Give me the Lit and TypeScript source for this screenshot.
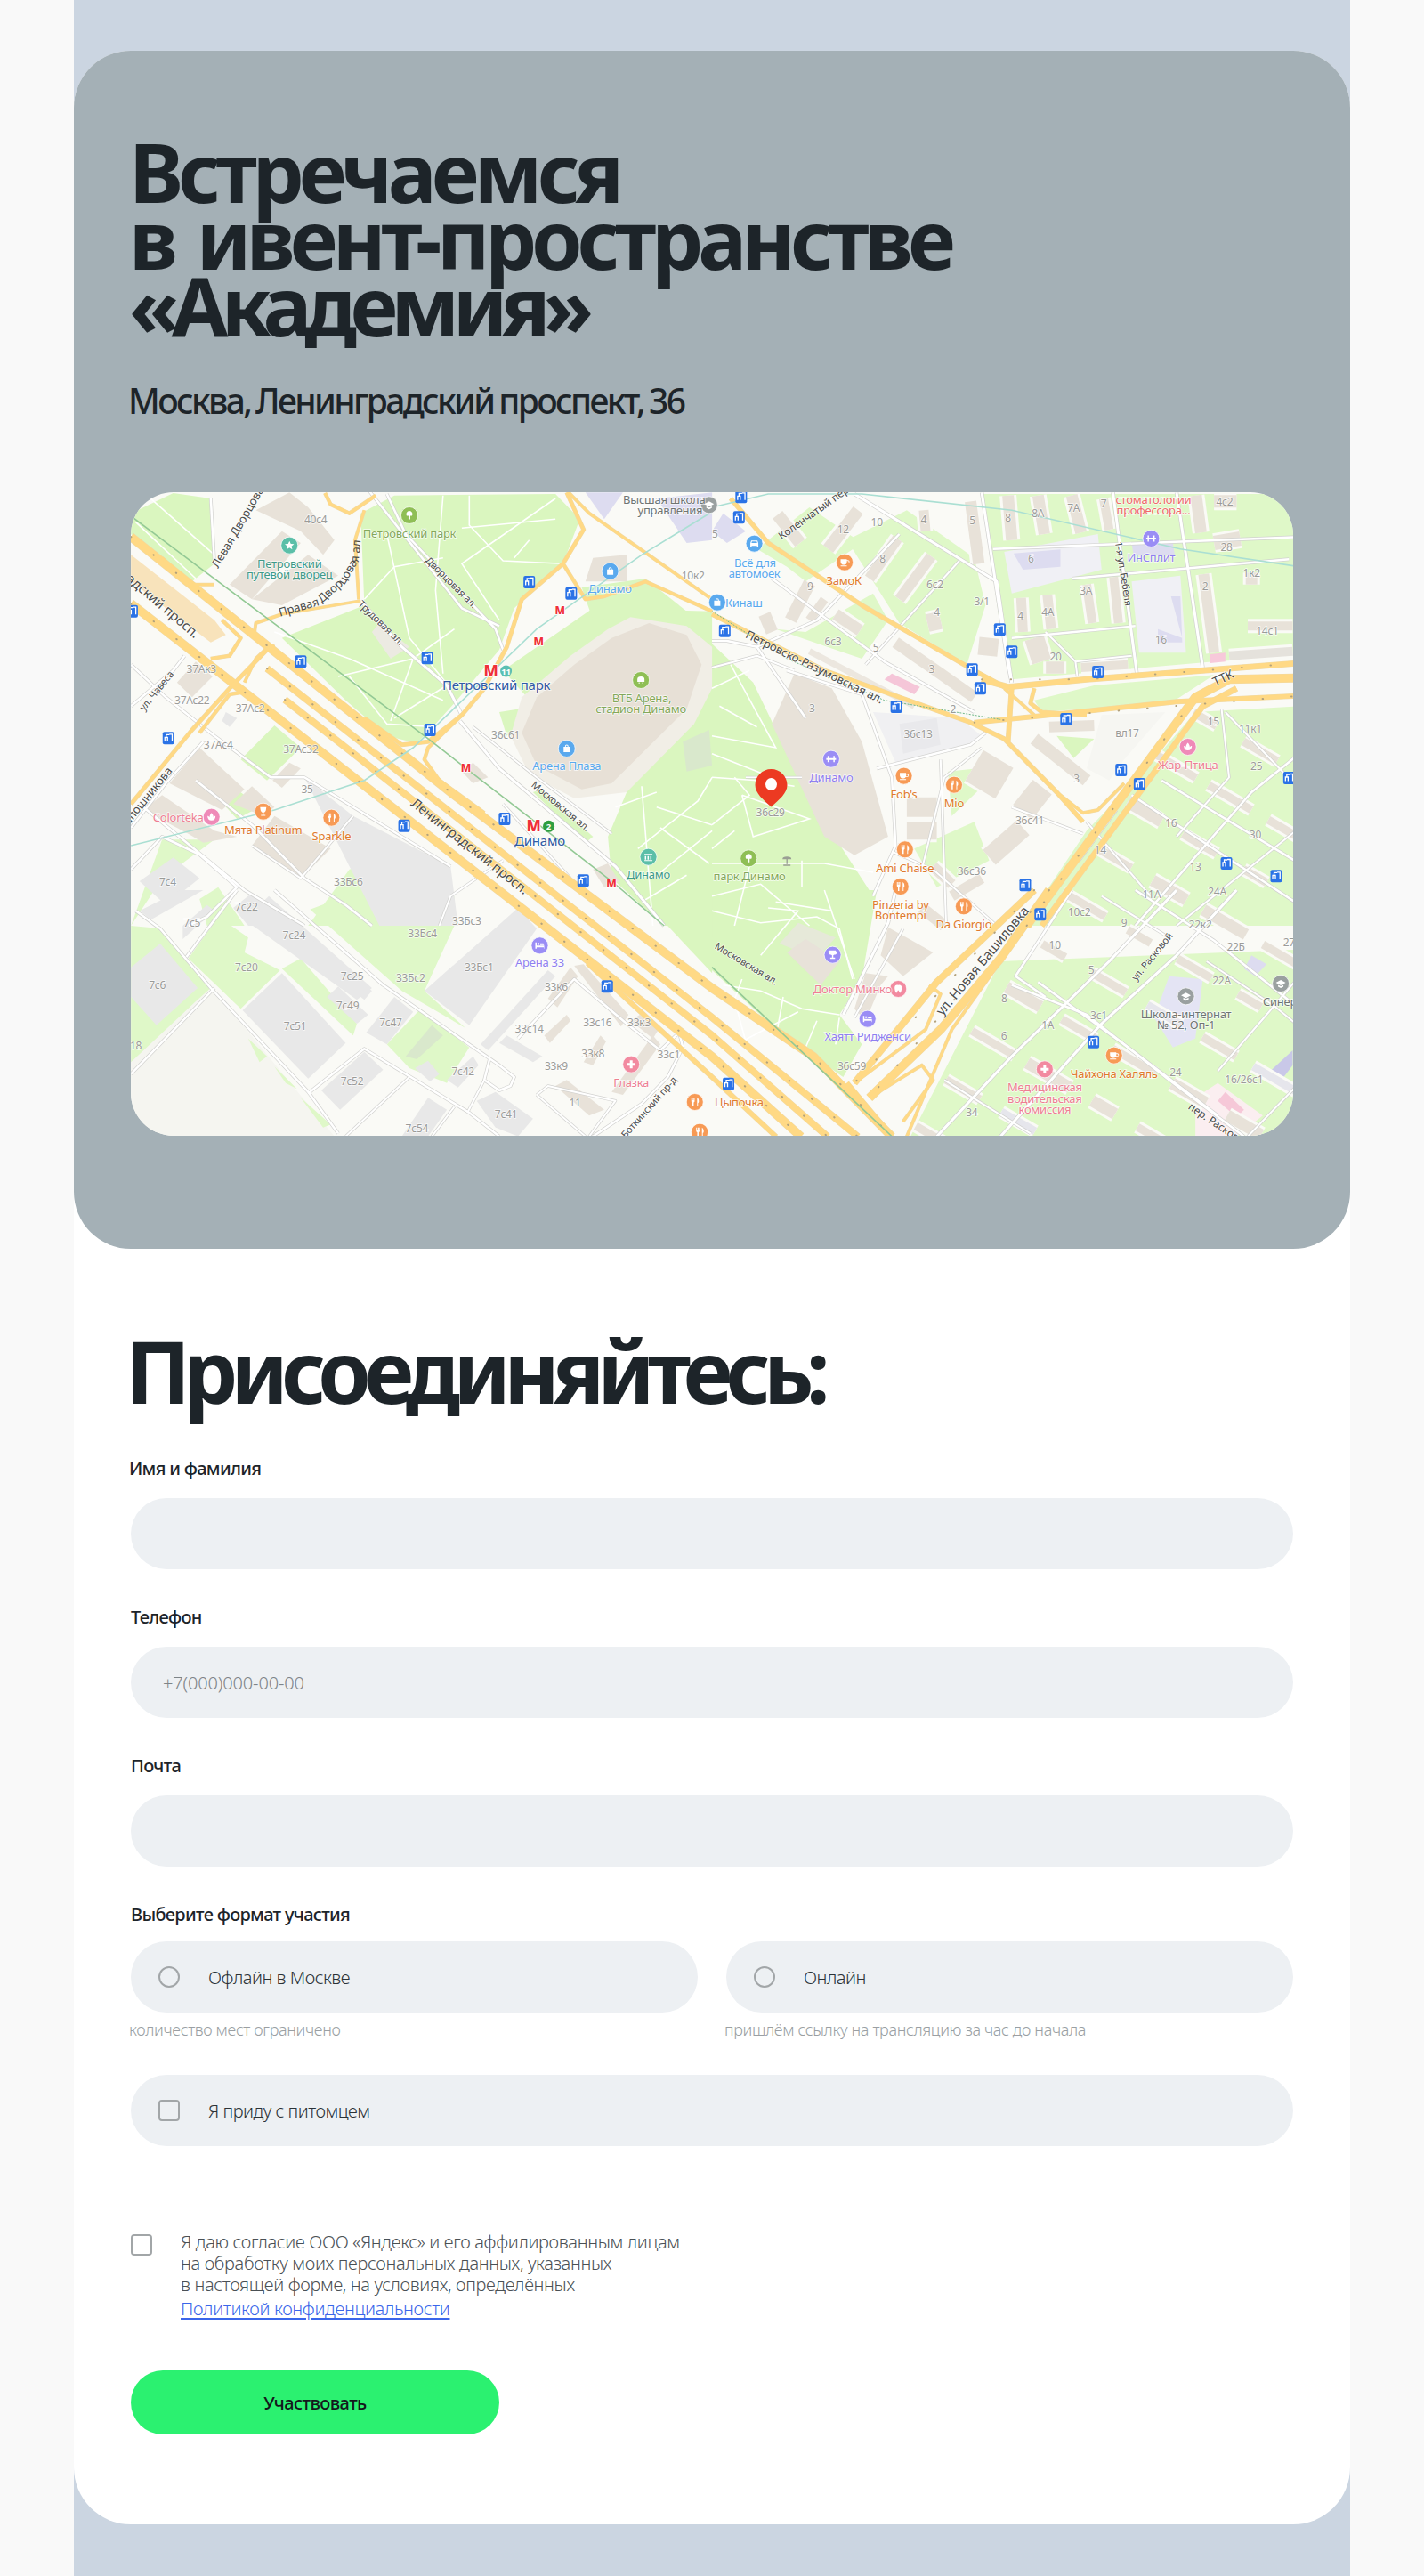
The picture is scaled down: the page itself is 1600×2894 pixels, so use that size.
import { LitElement, html, css, svg } from "lit";
import { customElement } from "lit/decorators.js";

type Fn = (x: number, y: number) => [number, number];
const A: Fn = (x, y) => [140 + x * 0.421, 540 + y / 3];
const B: Fn = (x, y) => [800 + x * 0.421, 540 + y / 3];
const C: Fn = (x, y) => [140 + x * 0.421, 1000 + y / 3];
const D: Fn = (x, y) => [800 + x * 0.421, 1000 + y / 3];
const P: Fn = (x, y) => [x, y];
const pts = (f: Fn, c: number[]) => {
  const o: string[] = [];
  for (let i = 0; i < c.length; i += 2) { const p = f(c[i], c[i + 1]); o.push(p[0].toFixed(1) + "," + p[1].toFixed(1)); }
  return o.join(" ");
};

const GREEN = "#daf6bf", LIGHT = "#dff8c8", BEIGE = "#e8e2d9", GREY = "#e8e8e8", LILAC = "#dddcf0", PALE = "#f0f0f5";
const areas: [string, Fn, number[]][] = [
  ["#f5f5f0", C, [17, 300, 240, 340, 560, 830, 17, 830]],
  ["#f8e3bb", A, [17, 250, 240, 470, 270, 520, 230, 545, 17, 340]],
  [GREEN, A, [630, 110, 720, 50, 1150, 45, 1215, 130, 1170, 280, 1040, 430, 1000, 570, 880, 750, 830, 820, 780, 885, 700, 860, 590, 740, 420, 530, 640, 420]],
  [GREEN, A, [17, 110, 130, 42, 230, 60, 240, 280, 180, 340, 17, 180]],
  [GREEN, A, [1250, 430, 1568, 440, 1568, 560, 1568, 1500, 1440, 1500, 1300, 1340, 1290, 1200, 1340, 1050, 1160, 850, 1010, 640]],
  [GREEN, B, [0, 550, 110, 680, 250, 1050, 430, 1400, 350, 1500, 0, 1500]],
  [GREEN, D, [0, 0, 440, 0, 400, 300, 340, 420, 400, 520, 350, 630, 180, 480, 0, 270]],
  [GREEN, C, [1360, 0, 1568, 0, 1568, 280]],
  [GREEN, A, [1220, 360, 1390, 330, 1500, 440, 1250, 470]],
  [GREEN, A, [310, 940, 400, 825, 470, 900, 380, 1010]],
  [GREEN, A, [190, 990, 240, 980, 360, 1100, 300, 1140]],
  [GREEN, A, [1000, 780, 1100, 760, 1020, 860]],
  [GREEN, A, [1090, 1050, 1110, 1040, 1250, 1200, 1230, 1220]],
  ["#f1eee6", A, [1350, 460, 1500, 490, 1568, 560, 1568, 700, 1520, 820, 1340, 1050, 1200, 1070, 1080, 990, 1030, 860, 1060, 730, 1190, 590, 1290, 500]],
  ["#e7e0d6", A, [1400, 480, 1500, 520, 1540, 620, 1500, 770, 1300, 1020, 1220, 1040, 1100, 960, 1060, 850, 1100, 730, 1200, 620, 1300, 530]],
  [LIGHT, A, [600, 1310, 700, 1260, 870, 1480, 880, 1500, 490, 1500]],
  [LIGHT, A, [17, 1500, 100, 1210, 240, 1210, 100, 1340]],
  [LIGHT, A, [200, 1410, 250, 1370, 320, 1500, 220, 1500]],
  [LIGHT, C, [495, 65, 590, 20, 880, 20, 880, 120, 800, 340, 910, 465, 740, 340]],
  [LIGHT, C, [170, 230, 250, 90, 330, 160, 320, 210, 415, 270, 310, 400]],
  [LIGHT, C, [17, 580, 190, 375, 230, 330, 100, 130, 17, 120]],
  [LIGHT, C, [420, 265, 470, 230, 620, 450, 610, 490]],
  [LIGHT, C, [700, 520, 790, 400, 920, 530, 860, 650, 760, 600]],
  [LIGHT, C, [330, 500, 380, 560, 360, 580]],
  [LIGHT, C, [400, 595, 460, 670, 430, 650]],
  [LIGHT, C, [470, 700, 550, 790, 530, 800]],
  [LIGHT, B, [720, 45, 1568, 45, 1568, 590, 1340, 610, 800, 670, 770, 500]],
  [LIGHT, B, [1290, 780, 1568, 760, 1568, 1500, 1100, 1500, 830, 1500, 1000, 1180, 1160, 970]],
  [LIGHT, D, [770, 240, 1568, 200, 1568, 830, 530, 830, 640, 560]],
  [LIGHT, B, [860, 740, 1020, 690, 1340, 655, 1230, 745, 880, 780]],
  [LIGHT, B, [120, 230, 260, 90, 400, 210, 250, 340, 200, 290]],
  [LIGHT, B, [360, 200, 520, 100, 700, 260, 730, 420, 680, 620, 500, 480]],
  [LIGHT, B, [170, 500, 250, 510, 430, 380, 470, 470, 400, 600, 330, 570]],
  [LIGHT, B, [630, 980, 780, 960, 640, 1130]],
  [LIGHT, B, [540, 1240, 700, 1150, 740, 1280, 600, 1370]],
  ["#f6f6f2", B, [1000, 970, 1040, 790, 1210, 780, 1100, 940, 1060, 1010]],
  [GREEN, B, [920, 860, 1020, 870, 965, 935]],
  [PALE, B, [780, 240, 1030, 180, 1040, 300, 800, 380]],
  [PALE, B, [1120, 340, 1250, 320, 1265, 580, 1140, 580]],
  [LILAC, B, [805, 245, 930, 232, 930, 290, 830, 300]],
  [LILAC, B, [1120, 210, 1230, 210, 1235, 250, 1125, 250]],
  [LILAC, B, [1190, 500, 1255, 530, 1225, 390, 1250, 390, 1255, 545, 1190, 545]],
  [LILAC, A, [1230, 40, 1330, 40, 1280, 130]],
  [LILAC, A, [1420, 60, 1568, 40, 1568, 200, 1500, 210]],
  [LILAC, B, [0, 170, 30, 110, 90, 170, 40, 210]],
  ["#f0f0f2", B, [430, 780, 660, 800, 720, 860, 680, 890, 490, 950]],
  ["#e9e9ec", B, [500, 820, 600, 800, 610, 890, 510, 920]],
  ["#f5c6d8", B, [460, 670, 480, 650, 555, 695, 540, 720]],
  ["#f7c9da", B, [1330, 585, 1370, 580, 1370, 610, 1330, 615]],
  ["#fbeef0", D, [1290, 700, 1350, 650, 1470, 760, 1400, 830, 1290, 830]],
  ["#f6c8d8", D, [1350, 710, 1370, 680, 1420, 740, 1400, 765]],
  ["#e4e4f4", D, [1220, 290, 1310, 300, 1290, 500, 1230, 530, 1180, 430]],
  [LILAC, D, [1440, 220, 1480, 250, 1450, 290, 1420, 265]],
  ["#c9c8e8", D, [1490, 610, 1550, 540, 1550, 590, 1520, 640]],
  [BEIGE, B, [220, 650, 320, 700, 400, 880, 470, 1200, 380, 1262, 300, 1200, 160, 820]],
  ["#e6e9d9", D, [230, 110, 330, 160, 280, 230, 180, 180]],
  [BEIGE, D, [200, 210, 250, 165, 340, 240, 290, 320]],
  [BEIGE, D, [470, 125, 590, 210, 510, 290, 450, 220]],
  [BEIGE, D, [410, 280, 470, 290, 450, 320, 410, 440, 380, 400]],
  [BEIGE, A, [280, 350, 420, 170, 470, 210, 340, 400]],
  [BEIGE, A, [350, 100, 440, 40, 490, 90, 560, 200, 530, 250, 470, 170]],
  [BEIGE, A, [490, 250, 570, 320, 420, 420, 340, 400]],
  ["#eceae2", A, [660, 510, 680, 480, 760, 560, 710, 600]],
  [GREY, A, [480, 1000, 610, 1130, 870, 1300, 890, 1500, 680, 1500]],
  [GREY, A, [270, 780, 300, 800, 280, 830, 260, 810]],
  [BEIGE, A, [50, 1110, 100, 1060, 240, 1180, 300, 1200, 210, 1220, 170, 1190]],
  [BEIGE, A, [340, 1230, 400, 1130, 550, 1240, 470, 1340]],
  [BEIGE, A, [120, 1020, 200, 900, 320, 1040, 260, 1110]],
  [BEIGE, A, [290, 1090, 340, 1030, 400, 1100, 370, 1130]],
  [BEIGE, A, [395, 1010, 440, 950, 470, 970, 420, 1035]],
  [BEIGE, A, [140, 680, 190, 610, 235, 660, 180, 730]],
  [GREY, A, [40, 1350, 130, 1270, 200, 1340, 110, 1430]],
  [GREY, A, [290, 1440, 340, 1390, 480, 1500, 330, 1500]],
  [BEIGE, A, [1250, 260, 1340, 250, 1340, 340, 1230, 340]],
  [BEIGE, A, [900, 980, 930, 950, 970, 1000, 930, 1020]],
  [BEIGE, A, [1250, 1310, 1290, 1290, 1320, 1350, 1280, 1370]],
  [GREY, C, [17, 260, 95, 180, 195, 330, 85, 455, 17, 360]],
  [GREY, C, [420, 280, 590, 515, 490, 635, 315, 405]],
  [GREY, C, [40, 70, 150, 0, 210, 0, 70, 100]],
  [GREY, C, [155, 120, 220, 50, 240, 70, 155, 165]],
  [GREY, C, [320, 100, 385, 20, 660, 330, 620, 370]],
  [GREY, C, [470, 200, 510, 170, 660, 340, 640, 370]],
  [GREY, C, [540, 360, 570, 325, 650, 420, 620, 450]],
  [GREY, C, [645, 480, 720, 360, 770, 410, 700, 520]],
  [GREY, C, [525, 675, 640, 545, 690, 605, 575, 740]],
  [GREY, C, [800, 340, 1050, 60, 1100, 130, 920, 455]],
  [GREY, C, [950, 520, 1130, 270, 1150, 290, 970, 540]],
  [GREY, C, [860, 640, 930, 560, 945, 590, 890, 665]],
  [GREY, C, [775, 600, 810, 575, 840, 620, 815, 645]],
  [GREY, C, [940, 710, 990, 680, 1090, 770, 1050, 830, 990, 800]],
  [GREY, C, [740, 830, 810, 700, 860, 740, 810, 830]],
  [GREY, C, [1000, 515, 1020, 490, 1115, 560, 1090, 580]],
  ["#d9e8cc", A, [1490, 880, 1560, 840, 1568, 960, 1500, 980]],
  ["#d9e8cc", C, [750, 560, 820, 455, 850, 490, 780, 570]],
  [BEIGE, C, [1120, 490, 1180, 420, 1190, 440, 1135, 515]],
  [BEIGE, C, [1225, 580, 1270, 490, 1285, 510, 1250, 590]],
  [BEIGE, C, [1150, 660, 1180, 640, 1280, 740, 1240, 760]],
  [BEIGE, C, [1300, 680, 1410, 490, 1430, 520, 1330, 690]],
  [BEIGE, C, [1130, 365, 1190, 260, 1210, 290, 1155, 395]],
  [BEIGE, C, [1200, 255, 1225, 250, 1345, 420, 1325, 460]],
  [BEIGE, C, [1350, 440, 1375, 420, 1425, 470, 1410, 500]],
];

const blocks: [Fn, number[], string?][] = [
  [B, [690, 70, 712, 280, 13]], [B, [790, 50, 800, 200, 13]], [B, [870, 50, 887, 180, 13]], [B, [960, 50, 985, 175, 13]],
  [B, [1045, 60, 1060, 165, 10]], [B, [1292, 50, 1305, 175, 13]], [B, [1340, 70, 1400, 70, 14]], [B, [1340, 210, 1410, 195, 16]],
  [B, [565, 100, 570, 170, 11]], [B, [825, 395, 830, 510, 11]], [B, [895, 385, 905, 500, 11]], [B, [1000, 350, 1015, 480, 10]],
  [B, [1072, 325, 1085, 480, 10]], [B, [1312, 315, 1340, 580, 12]], [B, [1440, 310, 1440, 350, 13]], [B, [1430, 490, 1550, 490, 10]],
  [B, [390, 100, 310, 230, 14]], [B, [495, 195, 420, 330, 12]], [B, [585, 255, 500, 400, 12]], [B, [490, 545, 700, 730, 13]],
  [B, [260, 345, 210, 470, 14]], [B, [300, 400, 260, 470, 10]], [B, [175, 115, 235, 210, 14]], [B, [330, 450, 395, 505, 13]],
  [B, [260, 575, 540, 760, 7], "#ecE7dF"], [B, [610, 470, 575, 480, 20]], [B, [740, 530, 735, 590, 22]], [B, [860, 530, 880, 610, 22]],
  [B, [915, 610, 915, 650, 20]], [B, [985, 630, 1110, 620, 10]], [B, [140, 450, 160, 510, 14]], [B, [1380, 590, 1550, 575, 10], "#e5e2dc"],
  [B, [900, 830, 1020, 825, 12]], [B, [860, 870, 1000, 1010, 14]], [B, [520, 1100, 600, 1100, 22]], [B, [520, 1180, 600, 1180, 20]],
  [B, [700, 960, 780, 1020, 40]], [B, [830, 1050, 880, 1100, 36]], [B, [740, 1270, 830, 1170, 22]], [B, [590, 1300, 640, 1360, 12]],
  [B, [640, 1400, 720, 1340, 12]], [B, [560, 1440, 620, 1500, 13]],
];
(() => {
  const e1 = [62, 36], e2 = [34, -52];
  let n = 0;
  for (let a = -6; a <= 8; a++) for (let b = -6; b <= 8; b++) {
    const x = 1150 + a * e1[0] + b * e2[0], y = 1120 + a * e1[1] + b * e2[1];
    if (y < 800 || y > 1285 || x > 1460) continue;
    if (x < 1179 - (y - 1000) * 0.58 + 24) continue;
    if (y < 810 && x < 1350) continue;
    n++;
    const d = n % 5 === 0 ? 13 : n % 3 === 0 ? 24 : 19;
    blocks.push([P, [x - d, y - d * 0.58, x + d, y + d * 0.58, n % 4 === 0 ? 13 : 9], n % 11 === 0 ? "#e6e6ec" : undefined]);
  }
})();

const streets: [Fn, number[], number][] = [
  [A, [1000, 490, 900, 430, 650, 30], 2.5], [A, [630, 405, 740, 560, 860, 690, 900, 790], 3], [A, [700, 45, 750, 180, 990, 500, 1010, 570], 2.5],
  [A, [895, 810, 1000, 970, 1310, 1300, 1440, 1500], 3], [A, [930, 830, 1100, 1000, 1300, 1190], 2], [A, [230, 60, 240, 280], 2.5],
  [A, [17, 620, 110, 730, 240, 860, 390, 1000, 480, 1000, 870, 1300], 2.5], [A, [17, 1170, 110, 1020, 210, 880], 2.5], [A, [17, 760, 130, 640, 160, 590], 2.5],
  [A, [40, 1090, 320, 1380, 480, 1500], 2.5], [A, [190, 1010, 340, 1160, 480, 1340, 590, 1430, 660, 1500], 2.5], [A, [17, 1310, 100, 1200, 200, 1260, 300, 1370, 220, 1470, 170, 1500], 2.5],
  [A, [340, 1230, 470, 1340, 610, 1130], 2], [A, [1190, 1340, 1010, 1090], 2], [A, [840, 1500, 870, 1400, 1010, 1280], 2],
  [C, [30, 70, 95, 130, 230, 330, 490, 680, 570, 820], 2.5], [C, [240, 330, 17, 620], 2.5], [C, [165, 225, 300, 0], 2.5], [C, [490, 685, 640, 535, 920, 750, 1000, 830], 2.5],
  [C, [400, 0, 690, 320, 1000, 590, 1040, 630, 1030, 660, 1000, 675, 960, 640, 975, 565], 2.5], [C, [915, 750, 960, 640], 2], [C, [590, 830, 760, 630], 2], [C, [820, 830, 880, 730], 2],
  [C, [1050, 500, 1200, 300, 1340, 450, 1430, 540, 1480, 480, 1490, 530, 1450, 630, 1380, 720, 1250, 830], 2.5], [C, [1100, 690, 1130, 660, 1310, 710, 1240, 830], 2], [C, [1100, 690, 1230, 830], 2],
  [B, [250, 800, 120, 560, 40, 540, 0, 540], 2.5], [B, [200, 640, 400, 720, 480, 1000, 490, 1230, 430, 1400], 2.5], [B, [440, 970, 690, 890, 730, 850], 2.5],
  [B, [0, 630, 120, 590, 220, 640], 2], [B, [90, 1000, 240, 1000], 1.5], [B, [610, 940, 625, 1500], 2], [B, [480, 1250, 590, 1310, 760, 1500], 2],
  [B, [380, 45, 760, 340, 800, 680], 3], [B, [720, 40, 790, 620, 800, 680], 3], [B, [1070, 40, 1135, 660], 3], [B, [1240, 40, 1310, 630], 3], [B, [750, 230, 1568, 190], 2.5],
  [B, [800, 530, 1130, 490], 2.5], [B, [960, 330, 1540, 265], 2.5], [B, [890, 510, 970, 610, 975, 660], 2], [B, [970, 610, 1120, 590], 2], [B, [500, 180, 280, 470, 120, 560], 2.5],
  [B, [160, 330, 460, 610, 700, 780], 2.5], [B, [660, 270, 410, 620], 2], [B, [560, 1310, 620, 1000, 720, 900], 2], [B, [1120, 1060, 1568, 1430], 2.5],
  [B, [1200, 1010, 1568, 1290], 2.5], [B, [1130, 1500, 1440, 1050, 1568, 920], 2.5], [B, [1240, 1500, 1568, 1170], 2], [B, [980, 1280, 1080, 1110], 2], [B, [1370, 780, 1568, 1040], 2],
  [B, [1360, 770, 1380, 1000, 1240, 1200], 2], [B, [800, 1100, 990, 1190], 2], [B, [1000, 1150, 1170, 1400], 2],
  [D, [600, 830, 800, 560, 1060, 240, 1240, 0], 3], [D, [770, 830, 1040, 450, 1240, 220, 1400, 0], 3], [D, [800, 320, 1000, 420, 1220, 640, 1420, 830], 2.5], [D, [870, 310, 1100, 520, 1350, 760], 2.5],
  [D, [960, 0, 810, 290, 890, 360], 2.5], [D, [1040, 20, 1220, 160], 2], [D, [1130, 0, 1340, 170, 1568, 400], 2.5], [D, [1320, 240, 1500, 390, 1568, 460], 2],
  [D, [1350, 610, 1480, 420, 1568, 290], 2], [D, [1430, 830, 1560, 660], 2], [D, [620, 640, 850, 820], 2], [D, [350, 420, 470, 110, 490, 0], 3], [D, [380, 430, 510, 130], 2],
];

const paths: [Fn, number[]][] = [
  [A, [700, 180, 760, 530, 870, 700]], [A, [850, 50, 830, 370, 850, 650]], [A, [920, 50, 920, 150, 1010, 270, 1170, 280]], [A, [1150, 60, 900, 280, 1000, 470]],
  [A, [900, 160, 1150, 130]], [A, [1080, 200, 1040, 260]], [A, [640, 400, 720, 290, 850, 260]], [A, [570, 660, 770, 600, 880, 500]], [A, [600, 660, 700, 820, 830, 830]],
  [A, [770, 600, 710, 810]], [A, [720, 800, 860, 690]], [A, [400, 510, 600, 600, 850, 740]], [A, [60, 50, 240, 250]], [A, [30, 140, 190, 330]], [A, [1410, 1500, 1380, 1030]],
  [A, [1370, 1240, 1530, 1080, 1568, 1000]], [A, [1420, 1100, 1568, 1160]], [A, [1430, 1320, 1568, 1180]], [A, [1310, 1100, 1420, 1050]], [A, [1430, 1170, 1560, 1290]], [A, [1380, 1420, 1500, 1330]],
  [B, [0, 1000, 120, 1010, 220, 1030]], [B, [0, 1160, 100, 1060, 60, 1000]], [B, [0, 1290, 300, 1290, 430, 1320]], [B, [0, 1400, 130, 1360, 260, 1500]], [B, [100, 1300, 60, 1500]],
  [B, [240, 1280, 240, 1370]], [B, [80, 1060, 260, 1140, 110, 1200, 80, 1060]], [B, [50, 620, 170, 900, 0, 860]], [B, [160, 1000, 0, 920]], [B, [0, 1240, 60, 1180]], [B, [0, 700, 100, 640]], [B, [20, 760, 120, 830]], [B, [170, 1420, 320, 1450]],
  [D, [0, 70, 130, 110, 280, 90, 340, 130, 375, 300]], [D, [150, 60, 230, 70, 130, 220]], [D, [300, 0, 380, 300]], [D, [30, 320, 130, 340, 240, 400, 340, 420]], [D, [80, 300, 60, 370, 90, 510]],
  [D, [190, 360, 170, 500]], [D, [280, 440, 240, 560]], [D, [230, 410, 80, 510]], [D, [340, 430, 330, 520]],
];

const yellow: [Fn, number[], number][] = [
  [P, [147, 603, 510, 893, 800, 1110, 914, 1187, 1002, 1277], 9],
  [P, [300, 751, 800, 1143, 964, 1277], 7],
  [P, [320, 786, 800, 1163, 930, 1277], 7],
  [P, [147, 678, 800, 1187, 900, 1277], 9],
  [P, [660, 1082, 800, 1210, 872, 1277], 5],
  [A, [17, 1090, 180, 840, 280, 700, 380, 570], 4], [A, [200, 850, 280, 720, 320, 712, 420, 800], 3.5],
  [A, [320, 680, 350, 600, 375, 570], 3], [A, [240, 350, 180, 350, 100, 260], 3], [A, [420, 450, 630, 405], 2.5], [A, [640, 100, 615, 200, 625, 400], 3],
  [A, [670, 50, 600, 110, 550, 80, 535, 42], 3.5], [A, [1180, 40, 1225, 165, 1170, 280, 1060, 400, 1020, 560, 960, 700, 900, 790, 810, 880, 740, 890, 640, 800], 4],
  [A, [900, 790, 810, 900, 800, 940, 840, 1010, 960, 1120], 3.5], [A, [1170, 280, 1230, 400, 1280, 390, 1390, 340, 1568, 440], 3.5], [A, [420, 450, 350, 480, 345, 530, 400, 560], 3],
  [A, [1185, 40, 1240, 110, 1568, 400], 3],
  [A, [260, 470, 310, 530, 280, 590, 230, 600], 3.5],
  [B, [50, 60, 150, 210, 400, 420, 700, 640, 780, 695], 4.5], [B, [0, 450, 300, 640, 690, 815, 780, 870, 920, 1050, 990, 1150], 4.5], [B, [720, 670, 790, 695, 1000, 670, 1568, 615], 6], [B, [700, 815, 860, 795, 1240, 745, 1568, 725], 5],
  [B, [800, 695, 790, 880], 5], [B, [860, 700, 850, 750, 880, 780, 1000, 790], 4], [B, [780, 700, 860, 790], 3], [B, [920, 1050, 990, 1120, 1030, 1110, 1100, 1020], 3],
  [B, [840, 1500, 1290, 730, 1380, 670, 1568, 665], 9], [B, [880, 1500, 1310, 760, 1400, 700], 6],
  [D, [860, 0, 600, 310, 380, 650], 7], [D, [900, 0, 770, 230, 610, 470, 420, 700], 9], [D, [770, 240, 640, 470, 520, 830], 3], [D, [580, 320, 610, 350, 570, 470, 380, 650], 3], [D, [420, 700, 560, 590, 590, 640, 510, 780], 3],
  [D, [360, 650, 380, 680, 480, 830], 5],
];
const mainDots: [Fn, number[]][] = [
  [P, [147, 603, 510, 893, 800, 1110, 914, 1187, 1002, 1277]], [P, [300, 751, 800, 1143, 964, 1277]], [P, [320, 786, 800, 1163, 930, 1277]], [P, [147, 678, 800, 1187, 900, 1277]],
  [B, [720, 670, 1000, 670, 1568, 615]], [B, [700, 815, 1568, 725]], [B, [840, 1500, 1290, 730]], [D, [860, 0, 380, 650]], [D, [900, 0, 420, 700]],
];

const N = "#9b9b98";
const nums: [Fn, string, number, number][] = [
  [A, "40с4", 510, 130], [A, "37Ак3", 205, 636], [A, "37Ас22", 180, 740], [A, "37Ас2", 335, 767], [A, "37Ас4", 250, 890], [A, "37Ас32", 470, 905], [A, "35", 487, 1040], [A, "36с61", 1017, 857], [A, "10к2", 1517, 321], [A, "7с4", 115, 1352], [A, "33Бс6", 597, 1353],
  [B, "5", 8, 180], [B, "10", 440, 140], [B, "12", 350, 165], [B, "4", 565, 130], [B, "5", 695, 135], [B, "8", 790, 125], [B, "8А", 870, 110], [B, "7А", 965, 93], [B, "7", 1045, 78], [B, "4с2", 1368, 72], [B, "28", 1373, 223], [B, "6", 851, 262], [B, "8", 455, 262], [B, "9", 262, 357], [B, "6с2", 595, 351], [B, "3/1", 720, 408], [B, "4", 600, 442], [B, "3А", 998, 372], [B, "1к2", 1440, 312], [B, "2", 1316, 356], [B, "4", 823, 455], [B, "4А", 896, 443], [B, "14с1", 1482, 505], [B, "16", 1198, 535], [B, "6с3", 323, 543], [B, "5", 437, 562], [B, "20", 917, 592], [B, "3", 586, 634], [B, "2", 643, 769], [B, "3", 267, 766], [B, "36с13", 550, 853], [B, "вл17", 1108, 850], [B, "15", 1338, 811], [B, "11к1", 1437, 836], [B, "25", 1453, 962], [B, "3", 973, 1005], [B, "36с41", 848, 1145], [B, "16", 1225, 1155], [B, "30", 1450, 1194], [B, "14", 1036, 1245], [B, "13", 1290, 1300], [B, "36с36", 693, 1315], [B, "24А", 1348, 1385], [B, "11А", 1173, 1395], [B, "36с29", 156, 1119],
  [C, "7с22", 325, 57], [C, "7с5", 180, 110], [C, "7с24", 452, 153], [C, "33Бс4", 795, 147], [C, "33Бс3", 913, 103], [C, "7с20", 325, 260], [C, "33Бс1", 946, 260], [C, "7с25", 607, 291], [C, "33Бс2", 763, 296], [C, "7с6", 87, 321], [C, "33к6", 1152, 326], [C, "7с49", 595, 388], [C, "7с47", 710, 447], [C, "33с16", 1262, 445], [C, "33к3", 1373, 447], [C, "7с51", 455, 459], [C, "33с14", 1080, 466], [C, "18", 30, 525], [C, "33к8", 1250, 550], [C, "33с1", 1452, 553], [C, "33к9", 1152, 593], [C, "7с42", 903, 612], [C, "7с52", 607, 644], [C, "11", 1202, 715], [C, "7с41", 1018, 755], [C, "7с54", 780, 803],
  [D, "10с2", 980, 73], [D, "9", 1100, 110], [D, "22к2", 1303, 115], [D, "10", 915, 186], [D, "22Б", 1398, 190], [D, "27", 1540, 177], [D, "5", 1012, 269], [D, "22А", 1360, 305], [D, "8", 780, 365], [D, "3с1", 1032, 422], [D, "1А", 896, 455], [D, "6", 779, 490], [D, "36с59", 373, 593], [D, "24", 1237, 613], [D, "16/26с1", 1420, 638], [D, "34", 693, 748],
];

const buses: [Fn, number, number][] = [
  [A, 1080, 342], [A, 1192, 380], [A, 20, 440], [A, 470, 610], [A, 808, 598], [A, 815, 840], [A, 117, 868], [A, 1014, 1140], [A, 746, 1163], [A, 1224, 1348],
  [B, 78, 55], [B, 72, 124], [B, 34, 506], [B, 768, 502], [B, 800, 577], [B, 694, 637], [B, 716, 700], [B, 1030, 645], [B, 492, 762], [B, 945, 804], [B, 1092, 975], [B, 1141, 1023], [B, 1540, 1002], [B, 1373, 1290], [B, 1506, 1333], [B, 836, 1363], [B, 876, 1462],
  [C, 1288, 325], [D, 1018, 512], [D, 44, 653],
];
const metroS: [Fn, number, number, number][] = [[A, 1162, 436, 12], [A, 1105, 541, 12], [A, 911, 968, 12], [A, 1299, 1357, 12], [A, 978, 642, 17], [A, 1092, 1165, 17]];

const OR = "#f79a55", ORT = "#e07a2c", BL = "#5aa9ee", PU = "#9a8df5", PUT = "#8f7ff0", PK = "#f28aa0", PKT = "#ee7f92", GR = "#8fbf55", GRT = "#84a85a", TE = "#5bbfa8", TET = "#3f9a88", GY = "#9aa0a0", GYT = "#6f7573", PN = "#ef8ab8";
type Poi = [Fn, number, number, string, string];
const pois: Poi[] = [
  [A, 440, 218, TE, "star"], [A, 760, 117, GR, "tree"], [A, 1296, 305, BL, "bag"], [A, 1378, 672, GR, "ball"], [A, 1180, 903, BL, "bag"], [A, 1398, 1268, TE, "col"], [A, 232, 1133, PN, "flower"], [A, 370, 1115, OR, "glass"], [A, 552, 1136, OR, "fork"], [A, 1560, 82, GY, "cap"],
  [B, 113, 212, BL, "car"], [B, 354, 275, OR, "cup"], [B, 14, 410, BL, "bag"], [B, 1172, 195, PU, "gym"], [B, 318, 938, PU, "gym"], [B, 512, 995, OR, "cup"], [B, 646, 1025, OR, "fork"], [B, 515, 1243, OR, "fork"], [B, 503, 1368, OR, "fork"], [B, 672, 1435, OR, "fork"], [B, 1270, 897, PN, "flower"], [B, 98, 1273, GR, "tree"],
  [C, 1108, 187, PU, "bed"], [C, 1352, 587, PK, "cross"], [C, 1522, 714, OR, "fork"], [C, 1535, 815, OR, "fork"],
  [D, 322, 218, PU, "cup2"], [D, 497, 333, PK, "tooth"], [D, 415, 434, PU, "bed"], [D, 1073, 557, OR, "cup"], [D, 888, 604, PK, "cross"], [D, 1265, 358, GY, "cap"], [D, 1518, 315, GY, "cap"],
];
type Lab = [Fn, string, number, number, string, number?];
const labs: Lab[] = [
  [A, "Петровский", 440, 280, TET], [A, "путевой дворец", 440, 316, TET], [A, "Петровский парк", 760, 178, GRT], [A, "Динамо", 1295, 364, BL], [A, "ВТБ Арена,", 1380, 733, GRT], [A, "стадион Динамо", 1378, 770, GRT], [A, "Арена Плаза", 1180, 962, BL],
  [A, "Петровский парк", 992, 690, "#2f5aa5", 15], [A, "Динамо", 1108, 1213, "#2f5aa5", 15], [A, "Динамо", 1398, 1327, TET], [A, "Colorteka", 143, 1136, PKT], [A, "Мята Platinum", 370, 1178, ORT], [A, "Sparkle", 552, 1197, ORT], [A, "Высшая школа", 1440, 64, GYT], [A, "управления", 1456, 100, GYT],
  [B, "Всё для", 115, 277, BL], [B, "автомоек", 113, 314, BL], [B, "ЗамоК", 352, 338, ORT], [B, "Кинаш", 85, 413, BL], [B, "ИнСплит", 1172, 258, PUT], [B, "стоматологии", 1178, 65, "#ef6a6a"], [B, "профессора...", 1178, 101, "#ef6a6a"], [B, "Динамо", 318, 1000, PUT], [B, "Fob's", 512, 1058, ORT], [B, "Mio", 646, 1088, ORT], [B, "Ami Chaise", 515, 1305, ORT], [B, "Pinzeria by", 503, 1428, ORT], [B, "Bontempi", 503, 1465, ORT], [B, "Жар-Птица", 1270, 957, PKT], [B, "парк Динамо", 100, 1334, GRT],
  [C, "Арена 33", 1108, 245, PUT], [C, "Глазка", 1352, 650, PKT], [C, "Цыпочка", 1640, 716, ORT],
  [D, "Da Giorgio", 672, 115, ORT], [D, "Доктор Минко", 375, 333, PKT], [D, "Хаятт Ридженси", 416, 494, PUT], [D, "Чайхона Халяль", 1073, 618, ORT], [D, "Медицинская", 888, 665, PKT], [D, "водительская", 888, 703, PKT], [D, "комиссия", 888, 740, PKT], [D, "Школа-интернат", 1265, 418, GYT], [D, "№ 52, Оп-1", 1265, 455, GYT], [D, "Синергия", 1540, 375, GYT],
];
const rot: [Fn, string, number, number, number, number, number?][] = [
  [A, "Левая Дворцовая", 240, 290, 360, 30, 13], [A, "Дворцовая ал.", 808, 262, 930, 415, 11], [A, "Трудовая ал.", 628, 410, 735, 540, 11], [A, "ул. Чавеса", 45, 770, 125, 645, 11], [A, "Московская ал.", 1090, 1020, 1220, 1155, 11],
  [B, "Коленчатый пер.", 180, 190, 340, 45, 12], [B, "Петровско-Разумовская ал.", 92, 515, 440, 730, 13], [B, "1-я ул. Бебеля", 1085, 205, 1110, 405, 11], [B, "ТТК", 1338, 680, 1400, 642, 14],
  [A, "Ленинградский просп.", 770, 1080, 1055, 1365, 15], [D, "ул. Новая Башиловка", 605, 415, 822, 85, 15], [D, "Московская ал.", 10, 185, 167, 305, 11], [D, "ул. Расковой", 1125, 300, 1222, 150, 11], [D, "пер. Расковой", 1275, 725, 1420, 850, 12], [C, "Боткинский пр-д", 1330, 830, 1457, 650, 11],
];
const rotEnd: [Fn, string, number, number, number, number, number][] = [
  [A, "Ленинградский просп.", 195, 520, 17, 330, 15], [A, "ул. Лапошникова", 120, 970, 17, 1130, 13],
];

const ic: Record<string, string> = {
  star: "M0-5 1.500-1.600 5.200-1.400 2.300 1 3.200 4.600 0 2.600-3.200 4.600-2.300 1-5.200-1.400-1.500-1.600Z",
  tree: "M0-5a3.600 3.600 0 0 1 3 5.500h-2v4h-2v-4h-2A3.600 3.600 0 0 1 0-5Z",
  bag: "M-3.500-2h7v6h-7Zm1.500 0a2 2.400 0 0 1 4 0h-1a1 1.400 0 0 0-2 0Z",
  ball: "M-4-1a4 3 0 0 1 8 0v3h-8Zm1.500 3.500h1v1.500h-1Zm4 0h1v1.500h-1Z",
  col: "M-4.500-3.500h9v1.500h-9Zm.5 2.500h1.500v4h-1.500Zm3 0h1.500v4h-1.500Zm3 0h1.500v4h-1.500Zm-6.500 4.500h9v1h-9Z",
  flower: "M-4.500-1c1 0 2 .6 2.300 1.500C-2.200-1.500-1.200-3.500 0-4.500c1.200 1 2.200 3 2.200 5 .3-.9 1.300-1.500 2.300-1.500 0 3-1.500 5-4.500 5s-4.500-2-4.500-5Z",
  glass: "M-3.500-5h7l-.5 3.500c-.3 1.600-1.500 2.500-2.500 2.600v2.700h2v1h-5v-1h2V1.100c-1-.1-2.200-1-2.500-2.600Z",
  fork: "M-4-5h1v3h.7v-3h1v3h.3v-3h.7v4.200c0 .7-.5 1.100-1 1.300V5h-1.500V.5c-.6-.2-1.200-.6-1.200-1.300Zm6.500 0c1.300.6 2 2.300 2 4.300 0 1.200-.4 1.700-1 1.900V5H2.500Z",
  cup: "M-4.500-3.500h7v1h1.200a1.800 1.800 0 0 1 0 3.800H2.200C1.500 2.400.5 2.800-1 2.800s-2.800-.5-3.500-3Zm7 2v2h1.200a1 1 0 0 0 0-2ZM-4.500 3.500h7v1h-7Z",
  cup2: "M-3.500-5h7v1h1.500c0 2.500-1 3.500-2.300 3.800C2-.5 1.200.3.700.5V3h2v1.500h-5.400V3h2V.5c-.5-.2-1.300-1-2-.7C-3-.5-5-1.500-5-4h1.500Z",
  gym: "M-5.500-1h1.500v-2.500h1.500V-1h5v-2.500h1.500V-1h1.500v2h-1.500v2.500H2.500V1h-5v2.500H-4V1h-1.500Z",
  car: "M-3.500-3.500h7l1 3v4h-1.500v-1h-6v1H-4.500v-4Zm.8 1-.5 1.800h6.400l-.5-1.800Z",
  cap: "M-5.500-1 0-4l5.500 3L0 2Zm2.500 2.500L0 3l3-1.500v2L0 5l-3-1.500Z",
  bed: "M-5-3.500h1.500V0h8.500v3.500H4.500V2h-8v1.500H-5Zm2.500.5h2v2.200h-2Zm3 .5h3c.7 0 1.200.5 1.200 1.200V-.7h-4.200Z",
  cross: "M-1.500-4.500h3v3h3v3h-3v3h-3v-3h-3v-3h3Z",
  tooth: "M-4-1.500C-4-4-2-5 0-4.200 2-5 4-4 4-1.500 4 1 3 4.500 2 4.500S1 1.500 0 1.500-1 4.500-2 4.500-4 1-4-1.500Z",
};

@customElement("map-view")
class MapView extends LitElement {
  static styles = css`
    :host { display: block; }
    svg { display: block; width: 100%; height: 100%; }
    text { font-family: "Noto Sans", "Open Sans", sans-serif; }
  `;
  render() {
    const lbl = (p: [number, number], t: string, fill: string, size: number, anchor = "middle", w = 400) =>
      svg`<text x=${p[0]} y=${p[1] + size * 0.36} fill=${fill} font-size=${size} font-weight=${w} text-anchor=${anchor} letter-spacing="-0.25" paint-order="stroke" stroke="rgba(255,255,255,.75)" stroke-width="1.6">${t}</text>`;
    return html`<svg viewBox="147 553 1306 723" preserveAspectRatio="none">
      <rect x="147" y="553" width="1306" height="723" fill="#fafaf6"></rect>
      ${areas.map(([fill, f, c]) => svg`<polygon points=${pts(f, c)} fill=${fill}></polygon>`)}
      ${paths.map(([f, c]) => svg`<polyline points=${pts(f, c)} fill="none" stroke="#fff" stroke-width="1.6"></polyline>`)}
      ${blocks.map(([f, b]) => svg`<polyline points=${pts(f, b.slice(0, 4))} fill="none" stroke="#fafaf6" stroke-width=${b[4] + 6}></polyline>`)}
      ${blocks.map(([f, b, col]) => svg`<polyline points=${pts(f, b.slice(0, 4))} fill="none" stroke=${col || BEIGE} stroke-width=${b[4]}></polyline>`)}
      ${streets.map(([f, c, w]) => svg`<polyline points=${pts(f, c)} fill="none" stroke="#d2d2d0" stroke-width=${w + 1.4} stroke-linejoin="round"></polyline>`)}
      ${streets.map(([f, c, w]) => svg`<polyline points=${pts(f, c)} fill="none" stroke="#fff" stroke-width=${w} stroke-linejoin="round"></polyline>`)}
      ${yellow.map(([f, c, w]) => svg`<polyline points=${pts(f, c)} fill="none" stroke="#efd9a6" stroke-width=${w + 1} stroke-linejoin="round"></polyline>`)}
      ${yellow.map(([f, c, w]) => svg`<polyline points=${pts(f, c)} fill="none" stroke="#ffd985" stroke-width=${w} stroke-linejoin="round"></polyline>`)}
      ${mainDots.map(([f, c]) => svg`<polyline points=${pts(f, c)} fill="none" stroke="#b3a27c" stroke-width="2" stroke-linecap="round" stroke-dasharray="0.5 32"></polyline>`)}
      <polyline points=${pts(A, [17, 1230, 400, 1110, 640, 1010, 770, 900, 1100, 500, 1380, 250, 1568, 105])} fill="none" stroke="#aadfd3" stroke-width="1.6"></polyline>
      <polyline points=${pts(B, [0, 90, 150, 45, 400, 45, 800, 100, 1250, 230, 1568, 290])} fill="none" stroke="#aadfd3" stroke-width="1.6"></polyline>
      <polyline points=${pts(A, [17, 120, 800, 860, 1300, 1350, 1440, 1500])} fill="none" stroke="#93c995" stroke-width="1.6"></polyline>
      <polyline points=${pts(D, [0, 260, 480, 830])} fill="none" stroke="#93c995" stroke-width="1.6"></polyline>
      <polyline points=${pts(B, [0, 440, 200, 600, 460, 740, 770, 805])} fill="none" stroke="#6fb88a" stroke-width="1" stroke-dasharray="2 1.5"></polyline>
      <path id="dvorc" d=${"M" + pts(A, [415, 458, 520, 420, 590, 345, 625, 270, 630, 205]).replace(/ /g, " L")} fill="none"></path>
      <text font-size="13" fill="#4c4c4a" letter-spacing="-0.1"><textPath href="#dvorc">Правая Дворцовая ал.</textPath></text>
      ${nums.map(([f, t, x, y]) => lbl(f(x, y), t, N, 12))}
      ${rot.map(([f, t, x1, y1, x2, y2, s]) => {
        const a = f(x1, y1), b = f(x2, y2);
        const ang = (Math.atan2(b[1] - a[1], b[0] - a[0]) * 180) / Math.PI;
        const size = s || 11;
        return svg`<text transform=${`translate(${a[0]} ${a[1]}) rotate(${ang})`} y=${size * 0.36} font-size=${size} fill="#4c4c4a" letter-spacing="-0.1" stroke="rgba(255,255,255,.7)" stroke-width="1.5" paint-order="stroke">${t}</text>`;
      })}
      ${rotEnd.map(([f, t, x1, y1, x2, y2, s]) => {
        const a = f(x1, y1), b = f(x2, y2);
        const ang = (Math.atan2(a[1] - b[1], a[0] - b[0]) * 180) / Math.PI;
        return svg`<text transform=${`translate(${a[0]} ${a[1]}) rotate(${ang})`} y=${s * 0.36} text-anchor="end" font-size=${s} fill="#4c4c4a" letter-spacing="-0.1" stroke="rgba(255,255,255,.7)" stroke-width="1.5" paint-order="stroke">${t}</text>`;
      })}
      ${buses.map(([f, x, y]) => {
        const p = f(x, y);
        return svg`<g transform=${`translate(${p[0]} ${p[1]})`}><rect x="-6.5" y="-7" width="13" height="14" rx="2" fill="#2a72e6"></rect><path d="M-4 3.500V-1h3v4.500M1-4.500h3.200V3.500M-2.500-1v-3h3.500" fill="none" stroke="#fff" stroke-width="1.3"></path></g>`;
      })}
      ${metroS.map(([f, x, y, s]) => {
        const p = f(x, y);
        return svg`<text x=${p[0]} y=${p[1] + s * 0.36} font-size=${s} font-weight="800" fill="#ef2f3a" text-anchor="middle" stroke="#fff" stroke-width="1.5" paint-order="stroke">М</text>`;
      })}
      ${[[A(1018, 642), "#5bbfb2", "11"], [A(1132, 1165), "#2f9e3f", "2"]].map(
        ([p, c, t]: any) => svg`<circle cx=${p[0]} cy=${p[1]} r="6.5" fill=${c}></circle><text x=${p[0]} y=${p[1] + 3.5} font-size="9.5" font-weight="700" fill="#fff" text-anchor="middle">${t}</text>`
      )}
      ${pois.map(([f, x, y, col, k]) => {
        const p = f(x, y);
        return svg`<g transform=${`translate(${p[0]} ${p[1]})`}><circle r="9.5" fill=${col} stroke="#fff" stroke-opacity=".7" stroke-width="1"></circle><path d=${ic[k]} fill="#fff"></path></g>`;
      })}
      <g transform=${`translate(${B(200, 1283)[0]} ${B(200, 1283)[1]})`}><path d="M-5-2.500a5 2.800 0 0 1 10 0ZM-.7-2.500h1.400V3h-1.400ZM-4 3.500h8v1.500h-8Z" fill="#9a9f94"></path></g>
      ${labs.map(([f, t, x, y, col, s]) => lbl(f(x, y), t, col, s || 13))}
      <path d="M866.500 864c-10 0-18 8-18 18 0 9 9 16.500 18 24.500 9-8 18-15.500 18-24.500 0-10-8-18-18-18Z" fill="#ec3a22"></path>
      <ellipse cx="866.5" cy="881" rx="6.5" ry="7" fill="#fff"></ellipse>
    </svg>`;
  }
}

@customElement("app-root")
class AppRoot extends LitElement {
  static styles = css`
    :host { display: block; background: #f9f9f9; min-height: 2894px; font-family: "Noto Sans", "Open Sans", sans-serif; color: #1d2429; }
    .col { margin: 0 83px; background: #cbd5e1; padding: 57px 0 58px; }
    .panel { background: #fff; border-radius: 64px; }
    .hero { background: #a4b0b6; border-radius: 64px; padding: 98px 64px 127px; }
    h1 { margin: 0 0 0 -2px; font-size: 92px; line-height: 75px; font-weight: 700; letter-spacing: -0.063em; word-spacing: 0.09em; }
    .tight { letter-spacing: -0.085em; }
    .addr { margin: 46px 0 79px -3px; font-size: 39px; line-height: 48px; font-weight: 500; letter-spacing: -0.068em; word-spacing: -0.04em; }
    map-view { width: 1306px; height: 723px; border-radius: 48px; overflow: hidden; }
    .form { padding: 87px 64px 101px; }
    h2 { margin: 0 0 0 -6px; font-size: 96px; line-height: 100px; font-weight: 700; letter-spacing: -0.083em; }
    .lbl { font-size: 20px; line-height: 24px; font-weight: 500; letter-spacing: -0.035em; margin: 0 0 21px; }
    .lbl.sm { margin-bottom: 18px; }
    .first { margin: 48px 0 21px -2px; }
    .field { height: 80px; border-radius: 40px; background: #edf0f3; display: flex; align-items: center; padding: 0 36px; box-sizing: border-box; font-size: 20px; font-weight: 300; letter-spacing: -0.007em; margin-bottom: 42px; }
    .ph { color: #7e8488; }
    .row { display: grid; grid-template-columns: 637px 637px; column-gap: 32px; }
    .opt { height: 80px; border-radius: 40px; background: #edf0f3; display: flex; align-items: center; gap: 32px; padding: 0 31px; box-sizing: border-box; font-size: 20px; font-weight: 300; letter-spacing: -0.025em; color: #2b3236; }
    .radio { width: 24px; height: 24px; border-radius: 50%; border: 2px solid #a2a6a8; box-sizing: border-box; flex: none; }
    .check { width: 24px; height: 24px; border-radius: 4px; border: 2px solid #a2a6a8; box-sizing: border-box; flex: none; }
    .hint { font-size: 18px; line-height: 24px; font-weight: 300; color: #9a9fa3; letter-spacing: -0.02em; margin: 7px 0 0 -2px; }
    .pet { margin-top: 39px; }
    .consent { display: flex; gap: 32px; margin-top: 96px; }
    .consent .check { margin-top: 3px; }
    .legal { font-size: 20px; line-height: 24px; font-weight: 300; letter-spacing: -0.017em; color: #4a5054; }
    .legal a { display: block; color: #3a66ea; text-decoration: underline; text-underline-offset: 3px; line-height: 30px; }
    button { display: block; width: 414px; height: 72px; border: 0; border-radius: 36px; background: #2bf170; margin-top: 54px; font: 500 20px "Noto Sans", sans-serif; letter-spacing: -0.03em; color: #14191c; }
  `;
  render() {
    return html`<div class="col"><div class="panel">
      <section class="hero">
        <h1>Встречаемся<br />в ивент-пространстве<br /><span class="tight">«Академия»</span></h1>
        <div class="addr">Москва, Ленинградский проспект, 36</div>
        <map-view></map-view>
      </section>
      <section class="form">
        <h2>Присоединяйтесь:</h2>
        <div class="lbl first">Имя и фамилия</div>
        <div class="field"></div>
        <div class="lbl">Телефон</div>
        <div class="field"><span class="ph">+7(000)000-00-00</span></div>
        <div class="lbl">Почта</div>
        <div class="field"></div>
        <div class="lbl sm">Выберите формат участия</div>
        <div class="row">
          <div><div class="opt"><span class="radio"></span>Офлайн в Москве</div><div class="hint">количество мест ограничено</div></div>
          <div><div class="opt"><span class="radio"></span>Онлайн</div><div class="hint">пришлём ссылку на трансляцию за час до начала</div></div>
        </div>
        <div class="opt pet"><span class="check"></span>Я приду с питомцем</div>
        <div class="consent"><span class="check"></span><div class="legal">Я даю согласие ООО «Яндекс» и его аффилированным лицам<br />на обработку моих персональных данных, указанных<br />в настоящей форме, на условиях, определённых<a href="#">Политикой конфиденциальности</a></div></div>
        <button>Участвовать</button>
      </section>
    </div></div>`;
  }
}
